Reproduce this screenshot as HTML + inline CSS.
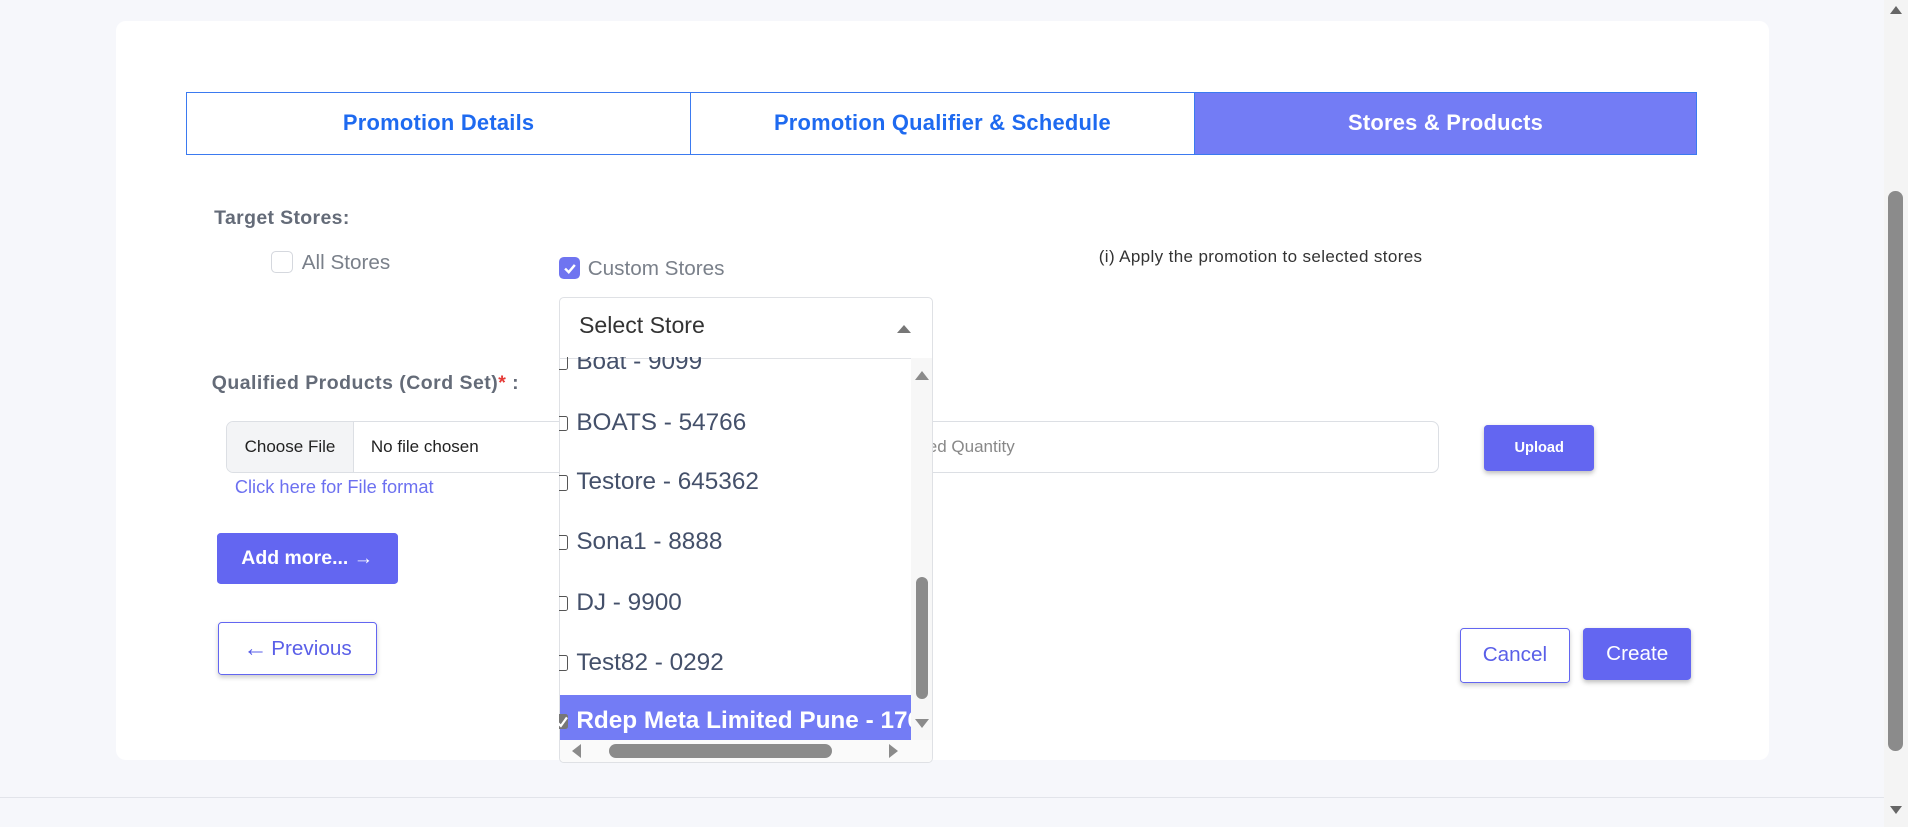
<!DOCTYPE html>
<html><head><meta charset="utf-8"><style>
html,body{margin:0;padding:0;width:1908px;height:827px;overflow:hidden;background:#f6f7fb;font-family:"Liberation Sans",sans-serif}
#z{zoom:1.2168;position:relative;width:1568px;height:680px}
.a{position:absolute}
.card{left:95px;top:17px;width:1359px;height:608px;background:#fff;border-radius:8px}
.tab{top:76px;height:51px;border:1px solid #3b7af0;background:#fff;color:#1e6af0;font-weight:bold;font-size:18px;display:flex;align-items:center;justify-content:center;box-sizing:border-box;letter-spacing:.2px}
.lbl{font-weight:bold;font-size:16px;color:#646b78}
.it{left:459px;font-size:20px;color:#44506a;white-space:nowrap}
.cb{display:inline-block;width:9px;height:11px;border:1px solid #555;border-radius:2px;margin-right:7px;vertical-align:-1px;margin-left:-3px;position:relative}
.btn{border-radius:3px;display:flex;align-items:center;justify-content:center;box-sizing:border-box;font-size:16px}
</style></head><body><div id="z">
<div class="a" style="left:0;top:655px;width:1548px;height:1px;background:#e2e4ea"></div>
<div class="a card"></div>
<div class="a tab" style="left:153px;width:415px">Promotion Details</div>
<div class="a tab" style="left:567px;width:415px">Promotion Qualifier &amp; Schedule</div>
<div class="a tab" style="left:981px;width:414px;background:#737cf5;color:#fff">Stores &amp; Products</div>
<div class="a lbl" style="left:176px;top:170px;letter-spacing:.3px">Target Stores:</div>
<div class="a" style="left:223px;top:206px;width:18px;height:18px;border:1px solid #d5d8de;border-radius:4px;box-sizing:border-box"></div>
<div class="a" style="left:248px;top:206px;font-size:17px;color:#7a808a">All Stores</div>
<div class="a" style="left:459px;top:211px;width:18px;height:18px;background:#6f74f0;border-radius:4px"><svg width="18" height="18"><path d="M5 9.5l3 3 5-6" stroke="#fff" stroke-width="2" fill="none"/></svg></div>
<div class="a" style="left:483px;top:211px;font-size:17px;color:#7a808a">Custom Stores</div>
<div class="a" style="left:903px;top:203px;font-size:14px;color:#333;letter-spacing:.3px">(i) Apply the promotion to selected stores</div>
<div class="a lbl" style="left:174px;top:306px;letter-spacing:.4px">Qualified Products (Cord Set)<span style="color:#e53935">*</span> :</div>
<div class="a" style="left:186px;top:346px;width:997px;height:43px;border:1px solid #dcdfe4;border-radius:6px;box-sizing:border-box;overflow:hidden">
<div class="a" style="left:0;top:0;width:103px;height:43px;background:#f3f4f6;border-right:1px solid #dcdfe4;font-size:14px;color:#222;line-height:41px;text-align:center">Choose File</div>
<div class="a" style="left:118px;top:0;font-size:14px;color:#222;line-height:41px">No file chosen</div>
<div class="a" style="left:536px;top:0;font-size:14px;color:#888;line-height:41px">Qualified Quantity</div>
</div>
<div class="a btn" style="left:1220px;top:349px;width:90px;height:38px;background:#6366f1;color:#fff;font-weight:bold;font-size:12px;box-shadow:0 2px 4px rgba(0,0,0,.25)">Upload</div>
<div class="a" style="left:193px;top:391px;font-size:15px;color:#6c70f0">Click here for File format</div>
<div class="a btn" style="left:178px;top:438px;width:149px;height:42px;background:#6366f1;color:#fff;font-weight:bold">Add more... →</div>
<div class="a btn" style="left:179px;top:511px;width:131px;height:44px;background:#fff;border:1px solid #6366f1;color:#5a5fe8;box-shadow:0 2px 4px rgba(0,0,0,.2);font-size:17px"><span style="font-size:20px;margin-right:3px">←</span>Previous</div>
<div class="a btn" style="left:1200px;top:516px;width:90px;height:45px;background:#fff;border:1px solid #6366f1;color:#5a5fe8;box-shadow:0 2px 4px rgba(0,0,0,.2);font-size:17px">Cancel</div>
<div class="a btn" style="left:1301px;top:516px;width:89px;height:43px;background:#6366f1;color:#fff;box-shadow:0 2px 4px rgba(0,0,0,.25);font-size:17px">Create</div>
<!-- dropdown -->
<div class="a" style="left:459px;top:244px;width:308px;height:383px;background:#fff;border:1px solid #dfe1e5;border-radius:4px;box-sizing:border-box;overflow:hidden">
<div class="a" style="left:0;top:0;width:308px;height:49px;border-bottom:1px solid #dfe1e5"></div>
<div class="a" style="left:16px;top:12px;font-size:19px;color:#333">Select Store</div>
<div class="a" style="left:277px;top:22px;width:0;height:0;border-left:6px solid transparent;border-right:6px solid transparent;border-bottom:7px solid #777"></div>
<div class="a" style="left:0;top:326px;width:289px;height:37px;background:#737cf5"></div>
<div class="a" style="left:289px;top:49px;width:19px;height:315px;background:#f7f7f7"></div>
<div class="a" style="left:293px;top:229px;width:10px;height:101px;background:#8b8b8b;border-radius:5px"></div>
<div class="a" style="left:292px;top:60px;width:0;height:0;border-left:6px solid transparent;border-right:6px solid transparent;border-bottom:8px solid #8b8b8b"></div>
<div class="a" style="left:292px;top:346px;width:0;height:0;border-left:6px solid transparent;border-right:6px solid transparent;border-top:8px solid #8b8b8b"></div>
<div class="a" style="left:0;top:363px;width:308px;height:20px;background:#fafafa"></div>
<div class="a" style="left:41px;top:367px;width:183px;height:11px;background:#8b8b8b;border-radius:6px"></div>
<div class="a" style="left:10px;top:367px;width:0;height:0;border-top:6px solid transparent;border-bottom:6px solid transparent;border-right:8px solid #8b8b8b"></div>
<div class="a" style="left:271px;top:367px;width:0;height:0;border-top:6px solid transparent;border-bottom:6px solid transparent;border-left:8px solid #8b8b8b"></div>
</div>
<div class="a" style="left:459px;top:293px;width:290px;height:314px;overflow:hidden">
<div class="a it" style="left:0;top:-7px"><span class="cb"></span>Boat - 9099</div>
<div class="a it" style="left:0;top:43px"><span class="cb"></span>BOATS - 54766</div>
<div class="a it" style="left:0;top:92px"><span class="cb"></span>Testore - 645362</div>
<div class="a it" style="left:0;top:141px"><span class="cb"></span>Sona1 - 8888</div>
<div class="a it" style="left:0;top:191px"><span class="cb"></span>DJ - 9900</div>
<div class="a it" style="left:0;top:240px"><span class="cb"></span>Test82 - 0292</div>
<div class="a it" style="left:0;top:288px;color:#fff;font-weight:bold"><span class="cb" style="background:#777;border-color:#777"><svg class="a" style="left:0;top:0" width="10" height="11"><path d="M1 6l3 3 5-7" stroke="#fff" stroke-width="1.8" fill="none"/></svg></span>Rdep Meta Limited Pune - 1760</div>
</div>
<!-- page scrollbar -->
<div class="a" style="left:1548px;top:0;width:20px;height:680px;background:#f4f4f4"></div>
<div class="a" style="left:1552px;top:157px;width:12px;height:460px;background:#8b8b8b;border-radius:6px"></div>
<div class="a" style="left:1553px;top:5px;width:0;height:0;border-left:5px solid transparent;border-right:5px solid transparent;border-bottom:7px solid #666"></div>
<div class="a" style="left:1553px;top:662px;width:0;height:0;border-left:5px solid transparent;border-right:5px solid transparent;border-top:7px solid #666"></div>
</div></body></html>
